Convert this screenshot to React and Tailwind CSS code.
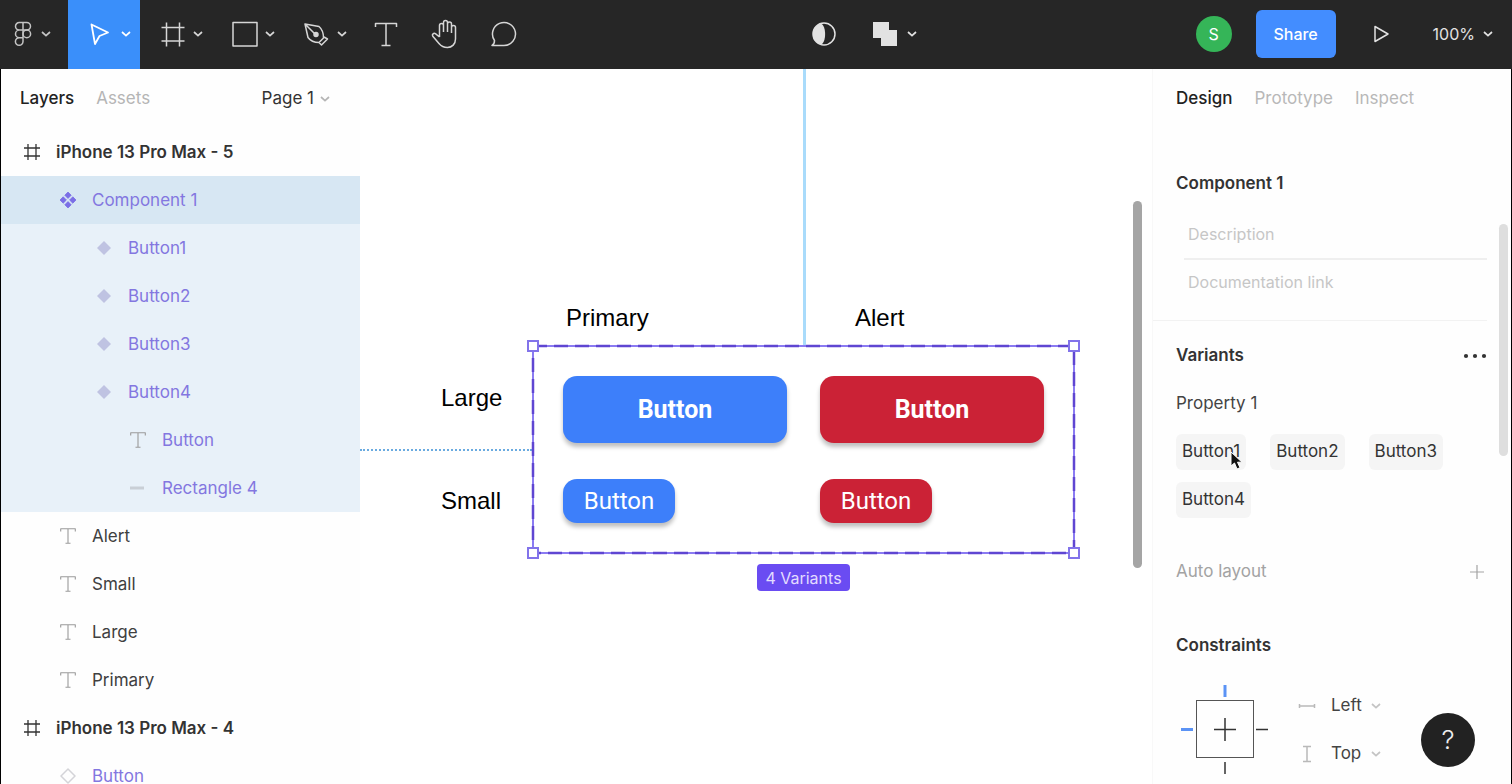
import React from "react";

function Chevron({ className = "" }) {
  return (
    <svg width="10" height="8" viewBox="0 0 10 8" fill="none" stroke="currentColor" strokeWidth="1.7" className={"shrink-0 " + className} aria-hidden="true">
      <path d="M1 2l4 3.6L9 2" />
    </svg>
  );
}

function Icon({ children, size = 26, className = "" }) {
  return (
    <svg width={size} height={size} viewBox={`0 0 ${size} ${size}`} fill="none" stroke="currentColor" strokeWidth="1.5" strokeLinejoin="round" className={"shrink-0 " + className} aria-hidden="true">
      {children}
    </svg>
  );
}

const FigmaMark = () => (
  <Icon>
    <path d="M13 1.500H9.300a3.800 3.800 0 0 0 0 7.600H13zM13 1.500h3.700a3.800 3.800 0 0 1 0 7.600H13M13 9.100H9.300a3.800 3.800 0 0 0 0 7.600H13zM9.300 16.700H13v3.800a3.800 3.800 0 1 1-3.700-3.800z" />
    <circle cx="16.800" cy="12.900" r="3.800" />
  </Icon>
);
const MoveIcon = () => (
  <Icon>
    <path d="M3.500 3.500l16.500 8-8.500 3.500-4.500 8z" strokeWidth="1.8" />
  </Icon>
);
const FrameToolIcon = () => (
  <Icon>
    <path d="M6.500 1.500v24M19.500 1.500v24M1.500 6.500h23M1.500 20h23" />
  </Icon>
);
const RectIcon = () => (
  <Icon>
    <path d="M1 1.500h24v23.500H1z" />
  </Icon>
);
const PenIcon = () => (
  <Icon>
    <path d="M1 3l14 2.500c3.500 3 4.500 6.500 4.500 11.500L15 21.500c-5 0-8.500-1.500-11-5zM1.500 3.500l9 9M15 21.500l2.500 2.500 6-6-3.500-2" />
    <circle cx="12" cy="13.500" r="2" fill="currentColor" />
  </Icon>
);
const TextToolIcon = () => (
  <Icon>
    <path d="M2.500 6V2.500h21V6M13 2.500v22M8.500 24.500h9" />
  </Icon>
);
const HandIcon = () => (
  <Icon size={30}>
    <path d="M9.500 18V6.500a2 2 0 0 1 4 0V13M13.500 13V3.500a2 2 0 0 1 4 0V13M17.500 13V5a2 2 0 0 1 4 0v9M21.500 14V8.500a2 2 0 0 1 4 0V20c0 5-3.500 8.500-8 8.500-4 0-6.500-1.500-8.500-4L2.800 17.300c-1.300-1.900 1-3.900 2.900-2.400L9.500 18" />
  </Icon>
);
const CommentIcon = () => (
  <Icon>
    <path d="M1 24.500c2-1 2.500-2.500 2.500-5A11.500 11.500 0 1 1 13 24.500z" />
  </Icon>
);

function Tool({ label, active, chevron, children }) {
  return (
    <button
      aria-label={label}
      className={
        "flex h-full items-center pb-[2px] " +
        (chevron ? "w-[72px] gap-[7px] pl-5 " : "w-[59px] justify-center ") +
        (active ? "bg-[#3a8ffa] text-white" : "text-[#d6d6d6]")
      }
    >
      {children}
      {chevron && <Chevron />}
    </button>
  );
}

function Toolbar() {
  return (
    <header className="flex h-[69px] shrink-0 items-center justify-between bg-[#262626] text-[#e2e2e2]">
      <div className="flex h-full items-center">
        <button aria-label="Main menu" className="flex h-full w-[68px] items-center gap-[5px] pb-[2px] pl-[10px] text-[#c4c4c4]">
          <FigmaMark />
          <Chevron />
        </button>
        <Tool label="Move" active chevron><MoveIcon /></Tool>
        <Tool label="Frame" chevron><FrameToolIcon /></Tool>
        <Tool label="Rectangle" chevron><RectIcon /></Tool>
        <Tool label="Pen" chevron><PenIcon /></Tool>
        <Tool label="Text"><TextToolIcon /></Tool>
        <Tool label="Hand"><HandIcon /></Tool>
        <Tool label="Comment"><CommentIcon /></Tool>
      </div>
      <div className="flex h-full items-center gap-9 pb-[2px]">
        <button aria-label="Mask">
          <Icon size={24}>
            <circle cx="12" cy="12" r="11" />
            <path d="M9 1.400C14.500 4 14.500 20 9 22.600A11 11 0 0 1 9 1.400z" fill="currentColor" stroke="none" />
          </Icon>
        </button>
        <button aria-label="Union" className="flex items-center gap-[9px]">
          <Icon size={26}>
            <path d="M1 1h16v8h8v16H9v-8H1z" fill="currentColor" stroke="none" />
          </Icon>
          <Chevron />
        </button>
      </div>
      <div className="flex h-full items-center pr-[19px] pb-[2px]">
        <span className="mr-6 flex size-9 items-center justify-center rounded-full bg-[#35b558] text-base text-white">S</span>
        <button className="mr-9 flex h-12 w-20 items-center justify-center rounded-[6px] bg-[#438dff] text-base font-medium text-white">Share</button>
        <button aria-label="Present" className="mr-[43px]">
          <Icon size={18}>
            <path d="M3 1.500l13 7.500-13 7.500z" />
          </Icon>
        </button>
        <button className="flex items-center gap-2 text-base">
          100%
          <Chevron />
        </button>
      </div>
    </header>
  );
}

const glyphs = {
  frame: (
    <Icon size={16} className="text-[#333]">
      <path d="M4 0v16M12 0v16M0 4h16M0 12h16" strokeWidth="1.3" />
    </Icon>
  ),
  component: (
    <Icon size={16} className="text-[#7b6fe6]">
      <path d="M8 0l3.200 3.200L8 6.400 4.800 3.200zM8 9.600l3.200 3.200L8 16l-3.200-3.200zM3.200 4.800L6.400 8l-3.200 3.200L0 8zM12.800 4.800L16 8l-3.200 3.200L9.600 8z" fill="currentColor" stroke="currentColor" strokeWidth="0.800" />
    </Icon>
  ),
  variant: (
    <Icon size={16} className="text-[#bfc3e2]">
      <path d="M8 1l7 7-7 7-7-7z" fill="currentColor" stroke="none" />
    </Icon>
  ),
  instance: (
    <Icon size={16} className="text-[#d4d4d8]">
      <path d="M8 1l7 7-7 7-7-7z" />
    </Icon>
  ),
  text: (
    <Icon size={16} className="text-[#9a9a9a]">
      <path d="M.7 3.500V.7h14.600v2.800M8 .7v14.600M5.500 15.300h5" strokeWidth="1.1" />
    </Icon>
  ),
  line: (
    <Icon size={16} className="text-[#c9cfd6]">
      <path d="M0 8h14" strokeWidth="3" />
    </Icon>
  ),
};

function LayerRow({ icon, name, indent, tone }) {
  return (
    <li>
      <button className={"flex h-12 w-full items-center gap-4 text-[17px] leading-4 " + indent + " " + tone}>
        {glyphs[icon]}
        <span>{name}</span>
      </button>
    </li>
  );
}

const L1 = "pl-[23px]";
const L2 = "pl-[59px]";
const L3 = "pl-[95px]";
const L4 = "pl-[129px]";
const purple = "text-[#8377e0]";
const dark = "text-[#404040]";

function LayersPanel() {
  return (
    <aside className="w-[360px] shrink-0 overflow-hidden border-l border-black bg-[#fefefe]">
      <div className="flex h-[59px] items-center pr-[30px] pl-[19px] text-[17px]">
        <button className="font-medium text-[#222]">Layers</button>
        <button className="ml-[22px] text-[#b5b5b5]">Assets</button>
        <button className="ml-auto flex items-center gap-[6px] text-[#333]">
          Page 1
          <Chevron className="text-[#b5b5b5]" />
        </button>
      </div>
      <ul>
        <LayerRow icon="frame" name="iPhone 13 Pro Max - 5" indent={L1} tone="font-semibold text-[#333]" />
      </ul>
      <ul className="bg-[#e8f1f9]">
        <LayerRow icon="component" name="Component 1" indent={L2} tone={"bg-[#d7e7f3] " + purple} />
        <LayerRow icon="variant" name="Button1" indent={L3} tone={purple} />
        <LayerRow icon="variant" name="Button2" indent={L3} tone={purple} />
        <LayerRow icon="variant" name="Button3" indent={L3} tone={purple} />
        <LayerRow icon="variant" name="Button4" indent={L3} tone={purple} />
        <LayerRow icon="text" name="Button" indent={L4} tone={purple} />
        <LayerRow icon="line" name="Rectangle 4" indent={L4} tone={purple} />
      </ul>
      <ul>
        <LayerRow icon="text" name="Alert" indent={L2} tone={dark} />
        <LayerRow icon="text" name="Small" indent={L2} tone={dark} />
        <LayerRow icon="text" name="Large" indent={L2} tone={dark} />
        <LayerRow icon="text" name="Primary" indent={L2} tone={dark} />
        <LayerRow icon="frame" name="iPhone 13 Pro Max - 4" indent={L1} tone="font-semibold text-[#333]" />
        <LayerRow icon="instance" name="Button" indent={L2} tone={purple} />
      </ul>
    </aside>
  );
}

function DemoButton({ color, size }) {
  return (
    <button
      className={
        "flex items-center justify-center rounded-[14px] font-['Roboto',sans-serif] text-white shadow-[0_4px_4px_rgba(0,0,0,0.25)] " +
        (color === "primary" ? "bg-[#3d7ffa] " : "bg-[#cb2236] ") +
        (size === "large" ? "h-[67px] w-56 text-[25px] font-bold" : "h-11 w-28 text-2xl")
      }
    >
      Button
    </button>
  );
}

const handle = "absolute size-3 border-2 border-[#8273ea] bg-white";
const caption = "absolute font-['Liberation_Sans',Arial,sans-serif] text-2xl leading-8 text-black";

function Canvas() {
  return (
    <main className="relative min-w-0 flex-1 overflow-hidden bg-white">
      <div className="absolute top-0 left-[443px] h-[276px] w-[3px] bg-[#a9dbfb]" />
      <div className="absolute top-[380px] left-0 w-[172px] border-t-2 border-dotted border-[#6aabe0]" />
      <span className={caption + " top-[233px] left-[206px]"}>Primary</span>
      <span className={caption + " top-[233px] left-[495px]"}>Alert</span>
      <span className={caption + " top-[313px] left-[81px]"}>Large</span>
      <span className={caption + " top-[416px] left-[81px]"}>Small</span>

      <div className="absolute top-[277px] left-[173px] grid grid-cols-[224px_224px] gap-x-[33px] gap-y-9 p-[30px]">
        <DemoButton color="primary" size="large" />
        <DemoButton color="alert" size="large" />
        <DemoButton color="primary" size="small" />
        <DemoButton color="alert" size="small" />
        <svg className="pointer-events-none absolute inset-0 h-full w-full overflow-visible" fill="none" aria-hidden="true">
          <rect width="100%" height="100%" stroke="#8b7bf2" strokeWidth="2" />
          <rect width="100%" height="100%" stroke="#5f46d2" strokeWidth="2.500" strokeDasharray="14 7" />
        </svg>
        <i className={handle + " -top-[6px] -left-[6px]"} />
        <i className={handle + " -top-[6px] -right-[6px]"} />
        <i className={handle + " -bottom-[6px] -left-[6px]"} />
        <i className={handle + " -right-[6px] -bottom-[6px]"} />
        <span className="absolute top-[218px] left-[224px] flex h-[27px] w-[93px] items-center justify-center rounded-[4px] bg-[#6a4cf2] text-base whitespace-nowrap text-[#e3dcff]">
          4 Variants
        </span>
      </div>
      <div className="absolute top-[132px] right-[10px] h-[367px] w-[9px] rounded-full bg-[#a5a5a5]" />
    </main>
  );
}

function Chip({ children }) {
  return (
    <button className="relative flex h-9 items-center rounded-[6px] bg-[#f5f5f5] px-[6px] text-[#333]">{children}</button>
  );
}

function Axis({ label, value, other, vertical }) {
  return (
    <label className="flex h-12 items-center">
      <Icon size={18} className="mr-[15px] text-[#b9b9b9]">
        {vertical ? <path d="M5 1.500h8M9 1.500v15M5 16.500h8" /> : <path d="M1.500 7v4M1.500 9h15M16.500 7v4" />}
      </Icon>
      <select aria-label={label} defaultValue={value} className="w-10 appearance-none bg-transparent text-[#444]">
        <option>{value}</option>
        <option>{other}</option>
      </select>
      <Chevron className="text-[#c4c4c4]" />
    </label>
  );
}

function DesignPanel() {
  return (
    <aside className="relative w-[360px] shrink-0 overflow-hidden border-r border-l border-r-black border-l-[#f8f8f8] bg-[#fefefe] pl-[23px] text-[17px]">
      <div className="mb-[31px] flex h-15 items-center gap-[22px]">
        <button className="font-medium text-[#222]">Design</button>
        <button className="text-[#b8b8b8]">Prototype</button>
        <button className="text-[#b8b8b8]">Inspect</button>
      </div>
      <h2 className="flex h-12 items-center font-semibold text-[#333]">Component 1</h2>
      <div className="mr-6 ml-2 pt-[2px] text-base">
        <input aria-label="Description" placeholder="Description" className="h-12 w-full border-0 bg-transparent px-1 placeholder:text-[#c6c6c6] focus:outline-none" />
        <div className="h-[2px] bg-[#efefef]" />
        <input aria-label="Documentation link" placeholder="Documentation link" className="h-11 w-full border-0 bg-transparent px-1 placeholder:text-[#c6c6c6] focus:outline-none" />
      </div>
      <div className="mt-4 mr-6 -ml-[23px] h-px bg-[#f2f2f2]" />
      <div className="mt-[11px] mr-6 flex h-12 items-center justify-between text-[#333]">
        <h2 className="font-semibold">Variants</h2>
        <button aria-label="Variant options">
          <svg width="24" height="6" viewBox="0 0 24 6" fill="currentColor" aria-hidden="true">
            <circle cx="3" cy="3" r="2.100" />
            <circle cx="12" cy="3" r="2.100" />
            <circle cx="21" cy="3" r="2.100" />
          </svg>
        </button>
      </div>
      <p className="flex h-12 items-center text-[#444]">Property 1</p>
      <div className="mr-12 flex flex-wrap gap-x-6 gap-y-3 py-[6px]">
        <Chip>
          Button1
          <svg width="14" height="20" viewBox="0 0 14 20" className="absolute top-[17px] left-[54px]" aria-hidden="true">
            <path d="M1 1v14l3.500-3L7 18l3-1.300-2.500-5.500H12z" fill="#111" stroke="#fff" />
          </svg>
        </Chip>
        <Chip>Button2</Chip>
        <Chip>Button3</Chip>
        <Chip>Button4</Chip>
      </div>
      <div className="mt-6 mr-[26px] flex h-12 items-center justify-between text-[#a3a3a3]">
        <h2>Auto layout</h2>
        <button aria-label="Add auto layout">
          <Icon size={16}>
            <path d="M8 1v14M1 8h14" strokeWidth="1.200" />
          </Icon>
        </button>
      </div>
      <h2 className="mt-[26px] flex h-12 items-center font-semibold text-[#333]">Constraints</h2>
      <div className="mt-3 flex gap-7">
        <svg width="94" height="100" viewBox="0 0 94 100" fill="none" stroke="#333" aria-hidden="true">
          <rect x="20.500" y="18.500" width="57" height="57" stroke="#555" />
          <path d="M38 47.500h22M49 36v23" strokeWidth="1.500" />
          <path d="M49 80v12M80 47.500h12" strokeWidth="1.500" />
          <path d="M49 3v12M5 47.500h12" stroke="#5b93f5" strokeWidth="3" />
        </svg>
        <div>
          <Axis label="Horizontal constraint" value="Left" other="Right" />
          <Axis label="Vertical constraint" value="Top" other="Bottom" vertical />
        </div>
      </div>
      <div className="absolute top-[155px] right-[3px] h-[232px] w-[9px] rounded-full bg-[#dedede]" />
      <button aria-label="Help" className="absolute right-9 bottom-[17px] flex size-[54px] items-center justify-center rounded-full bg-[#222] text-[26px] leading-8 font-light text-[#eee]">
        ?
      </button>
    </aside>
  );
}

export default function App() {
  return (
    <div className="flex h-screen flex-col overflow-hidden bg-white font-['Inter',sans-serif]">
      <Toolbar />
      <div className="flex min-h-0 flex-1">
        <LayersPanel />
        <Canvas />
        <DesignPanel />
      </div>
    </div>
  );
}
